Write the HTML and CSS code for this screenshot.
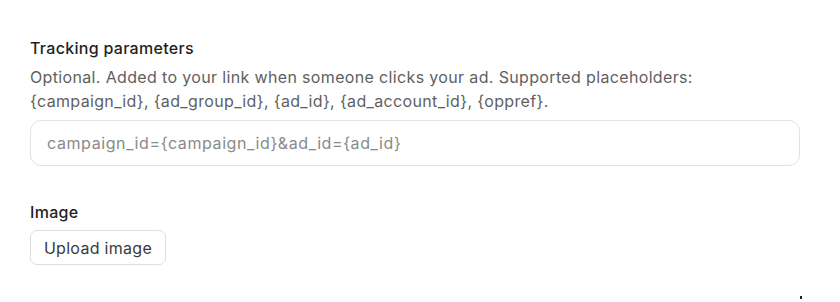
FILE: index.html
```html
<!DOCTYPE html>
<html lang="en">
<head>
<meta charset="utf-8">
<link rel="stylesheet" href="styles.css">
</head>
<body>
<main class="form">
  <section class="field">
    <label class="label" for="tracking">Tracking parameters</label>
    <p class="help">Optional. Added to your link when someone clicks your ad. Supported placeholders: {campaign_id}, {ad_group_id}, {ad_id}, {ad_account_id}, {oppref}.</p>
    <input id="tracking" class="input" type="text" placeholder="campaign_id={campaign_id}&amp;ad_id={ad_id}">
  </section>
  <section class="field field-image">
    <div class="label">Image</div>
    <button class="btn" type="button">Upload image</button>
  </section>
</main>
<span class="dot"></span>
</body>
</html>
```
FILE: styles.css
```css
html, body {
  margin: 0;
  padding: 0;
  background: #ffffff;
}
body {
  font-family: Inter, "Noto Sans", sans-serif;
  color: #1f1f1f;
  position: relative;
  width: 840px;
  height: 302px;
  overflow: hidden;
}
.form {
  width: 770px;
  padding: 37px 0 0 30px;
  display: flex;
  flex-direction: column;
  gap: 35px;
}
.field {
  display: flex;
  flex-direction: column;
}
.label {
  font-size: 16px;
  font-weight: 500;
  line-height: 22px;
  letter-spacing: 0.3px;
  color: #1f1f1f;
}
.help {
  margin: 6px 0 7px;
  font-size: 16px;
  line-height: 24px;
  letter-spacing: 0.35px;
  color: #5f5f5f;
  width: 680px;
}
.input {
  box-sizing: border-box;
  width: 770px;
  height: 46px;
  border: 1px solid #e2e2e2;
  border-radius: 11px;
  padding: 0 16px;
  font-family: Inter, "Noto Sans", sans-serif;
  font-size: 16px;
  letter-spacing: 0.6px;
  color: #1f1f1f;
  outline: none;
}
.input::placeholder {
  color: #8a8a8a;
}
.field-image .label {
  margin-bottom: 7px;
}
.btn {
  align-self: flex-start;
  box-sizing: border-box;
  height: 35px;
  width: 136px;
  background: #ffffff;
  border: 1px solid #dedede;
  border-radius: 7px;
  font-family: Inter, "Noto Sans", sans-serif;
  font-size: 16px;
  letter-spacing: 0.3px;
  color: #3a3a3a;
  padding: 0;
}
.dot {
  position: absolute;
  left: 800px;
  top: 296px;
  width: 2px;
  height: 3px;
  background: #222;
}
```
